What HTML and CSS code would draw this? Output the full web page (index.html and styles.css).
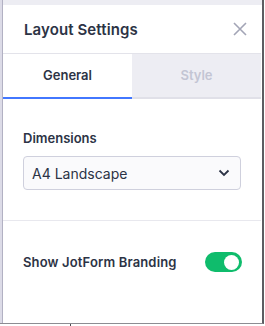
FILE: index.html
```
<!DOCTYPE html>
<html lang="en">
<head>
    <meta charset="UTF-8">
    <meta name="viewport" content="width=device-width, initial-scale=1.0">
    <title>Layout Settings</title>
    <link rel="stylesheet" href="styles.css">
</head>
<body>
    <div class="window">
        <div class="rail"></div>
        <div class="panel">
            <div class="header">
                <h2>Layout Settings</h2>
                <button class="close" type="button" aria-label="Close">
                    <svg width="14" height="14" viewBox="0 0 14 14">
                        <path d="M1 1 L13 13 M13 1 L1 13" stroke="#a3a5b6" stroke-width="1.6" fill="none"/>
                    </svg>
                </button>
            </div>
            <div class="tabs">
                <div class="tab active">General</div>
                <div class="tab">Style</div>
            </div>
            <div class="section">
                <label class="label" for="dimensions">Dimensions</label>
                <div class="select">
                    <span>A4 Landscape</span>
                    <svg width="12" height="8" viewBox="0 0 12 8">
                        <path d="M1.5 1.5 L6 6 L10.5 1.5" stroke="#2c3345" stroke-width="1.8" fill="none"/>
                    </svg>
                </div>
            </div>
            <div class="section row">
                <span class="label wide">Show JotForm Branding</span>
                <div class="toggle"><div class="knob"></div></div>
            </div>
        </div>
    </div>
    <div class="below"><span class="mark"></span></div>
</body>
</html>
```

FILE: styles.css
```
body {
    margin: 0;
    background-color: #fff;
    font-family: Inter, "Noto Sans", sans-serif;
    color: #2c3345;
}
.window {
    display: flex;
    width: 264px;
    height: 324px;
    box-sizing: border-box;
    border-right: 2px solid #5d5d62;
    border-bottom: 1px solid #8c8c92;
}
.rail {
    width: 2px;
    background-color: #dcdbe7;
    border-right: 1px solid #b2b1c3;
}
.panel {
    flex: 1;
    border-top: 5px solid #ededf3;
    padding-right: 1px;
}
.header {
    display: flex;
    align-items: center;
    justify-content: space-between;
    height: 48px;
    padding: 0 14px 0 21px;
    border-bottom: 1px solid #e3e3ea;
}
.header h2 {
    margin: 0;
    font-size: 15px;
    font-weight: 600;
    letter-spacing: 0.1px;
}
.close {
    border: none;
    background: none;
    padding: 0;
    width: 14px;
    height: 14px;
    cursor: pointer;
}
.tabs {
    display: flex;
}
.tab {
    flex: 1;
    height: 43px;
    line-height: 43px;
    text-align: center;
    font-size: 13px;
    font-weight: 600;
    color: #c3c5d4;
    background-color: #ededf3;
    border-bottom: 2px solid #e0e0e8;
}
.tab.active {
    color: #2c3345;
    background-color: #fff;
    border-bottom-color: #4277ff;
}
.section {
    padding: 31px 20px 30px 20px;
    border-bottom: 1px solid #e8e8ee;
}
.label {
    display: block;
    font-size: 13px;
    font-weight: 600;
    line-height: 16px;
}
.label.wide {
    letter-spacing: 0.15px;
}
.select {
    display: flex;
    align-items: center;
    justify-content: space-between;
    margin-top: 10px;
    height: 34px;
    box-sizing: border-box;
    padding: 0 10px 0 8px;
    border: 1px solid #cfd0dd;
    border-radius: 4px;
    background-color: #fafafc;
    font-size: 14px;
}
.row {
    display: flex;
    align-items: center;
    justify-content: space-between;
    padding-right: 19px;
    border-bottom: none;
}
.toggle {
    width: 37px;
    height: 20px;
    border-radius: 10px;
    background-color: #0fbc6c;
    display: flex;
    align-items: center;
    justify-content: flex-end;
    padding-right: 3px;
    box-sizing: border-box;
}
.knob {
    width: 15px;
    height: 15px;
    border-radius: 50%;
    background-color: #fff;
}
.below {
    height: 2px;
}
.mark {
    display: block;
    width: 1px;
    height: 2px;
    margin-left: 70px;
    background-color: #4a4a50;
}
```
